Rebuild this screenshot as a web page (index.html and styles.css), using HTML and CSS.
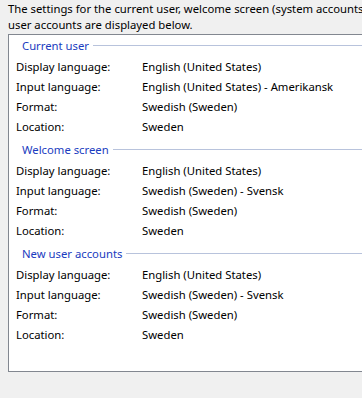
FILE: index.html
```html
<!DOCTYPE html>
<html lang="en">
<head>
    <meta charset="UTF-8">
    <title>Region settings</title>
    <link rel="stylesheet" href="styles.css">
</head>
<body>
    <div class="intro">The settings for the current user, welcome screen (system accounts) and new user accounts are displayed below.</div>

    <div class="panel">
        <div class="group">
            <div class="group-title"><span>Current user</span></div>
            <div class="row"><span class="label">Display language:</span><span>English (United States)</span></div>
            <div class="row"><span class="label">Input language:</span><span>English (United States) - Amerikansk</span></div>
            <div class="row"><span class="label">Format:</span><span>Swedish (Sweden)</span></div>
            <div class="row"><span class="label">Location:</span><span>Sweden</span></div>
        </div>

        <div class="group">
            <div class="group-title"><span>Welcome screen</span></div>
            <div class="row"><span class="label">Display language:</span><span>English (United States)</span></div>
            <div class="row"><span class="label">Input language:</span><span>Swedish (Sweden) - Svensk</span></div>
            <div class="row"><span class="label">Format:</span><span>Swedish (Sweden)</span></div>
            <div class="row"><span class="label">Location:</span><span>Sweden</span></div>
        </div>

        <div class="group">
            <div class="group-title"><span>New user accounts</span></div>
            <div class="row"><span class="label">Display language:</span><span>English (United States)</span></div>
            <div class="row"><span class="label">Input language:</span><span>Swedish (Sweden) - Svensk</span></div>
            <div class="row"><span class="label">Format:</span><span>Swedish (Sweden)</span></div>
            <div class="row"><span class="label">Location:</span><span>Sweden</span></div>
        </div>
    </div>
</body>
</html>
```

FILE: styles.css
```css
body {
    background-color: #f0f0f0;
    font-family: "Noto Sans", sans-serif;
    font-size: 11.3px;
    color: #000000;
    margin: 0;
    padding: 0;
    overflow: hidden;
}

.intro {
    width: 420px;
    padding: 1px 0 0 8px;
    line-height: 16px;
}

.panel {
    margin: 1px 0 0 8px;
    width: 420px;
    height: 336px;
    background-color: #ffffff;
    border: 1px solid #828790;
}

.group {
    margin-bottom: 3px;
}

.group-title {
    display: flex;
    align-items: center;
    height: 21px;
    padding-left: 13px;
    color: #1a3cc0;
}

.group-title::after {
    content: "";
    flex: 1;
    height: 1px;
    margin-left: 4px;
    background-color: #b8c3dc;
}

.row {
    display: flex;
    align-items: center;
    height: 20px;
    padding-left: 7px;
    white-space: nowrap;
}

.label {
    width: 126px;
}
```
